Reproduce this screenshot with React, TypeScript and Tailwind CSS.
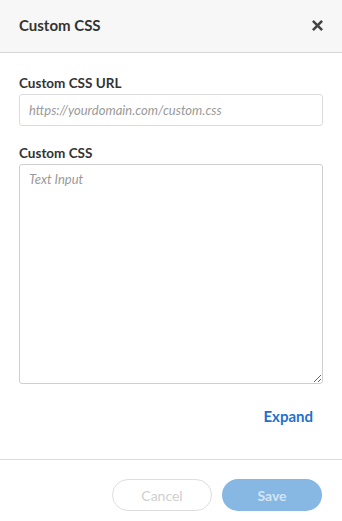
export default function App() {
  return (
    <div className="w-[342px] h-[521px] bg-white flex flex-col text-[#333]" style={{ fontFamily: 'Lato, "Noto Sans", sans-serif' }}>
      {/* header */}
      <div className="h-[53px] shrink-0 bg-[#f7f7f7] border-b border-[#d6d6d6] flex items-center justify-between pl-[19px] pr-[19px]">
        <span className="text-[15px] font-bold text-[#333] mt-[-2px]">Custom CSS</span>
        <button className="w-[12px] h-[12px] flex items-center justify-center mt-[-2px]">
          <svg viewBox="0 0 12 12" className="w-[11px] h-[11px]">
            <path d="M2 2L10 10M10 2L2 10" stroke="#444" strokeWidth="2.8" strokeLinecap="square" />
          </svg>
        </button>
      </div>

      {/* body */}
      <div className="flex-1 px-[19px] pt-[20px] flex flex-col">
        <label className="text-[13.5px] leading-[20px] font-bold text-[#333]">Custom CSS URL</label>
        <input
          className="mt-[1px] h-[32px] w-full border border-[#dcdcdc] rounded-[3px] px-[9px] text-[13px] italic placeholder:text-[#9a9a9a] outline-none"
          placeholder="https://yourdomain.com/custom.css"
        />
        <label className="mt-[17px] text-[13.5px] leading-[20px] font-bold text-[#333]">Custom CSS</label>
        <textarea
          className="mt-[1px] h-[220px] w-full border border-[#cfcfcf] rounded-[3px] px-[9px] py-[5px] text-[13px] italic placeholder:text-[#9a9a9a] outline-none resize-y"
          placeholder="Text Input"
        />
        <div className="mt-[22px] flex justify-end pr-[10px]">
          <button className="text-[15px] leading-[20px] font-bold text-[#1f6fd1]">Expand</button>
        </div>
      </div>

      {/* footer */}
      <div className="h-[62px] shrink-0 border-t border-[#dcdcdc] flex justify-end items-start gap-[10px] pr-[20px] pt-[19px]">
        <button className="w-[100px] h-[32px] rounded-full border border-[#dedede] text-[14px] text-[#cfcfcf] bg-white">Cancel</button>
        <button className="w-[100px] h-[32px] rounded-full bg-[#87b8e3] text-[14px] font-bold text-[#d3e4f4]">Save</button>
      </div>
    </div>
  );
}
